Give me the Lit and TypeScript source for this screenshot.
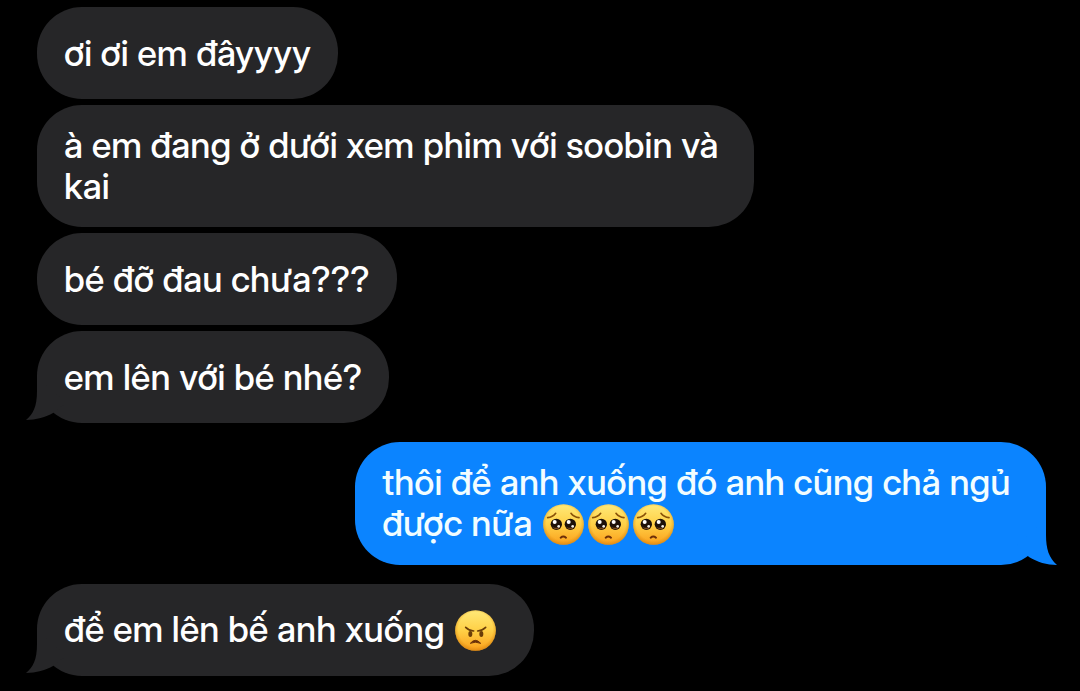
import { LitElement, html, css, svg, nothing } from "lit";
import { customElement, property } from "lit/decorators.js";

type Side = "incoming" | "outgoing";
type Face = "pleading" | "angry";
type Part = string | { face: Face };

interface Message {
  parts: Part[];
}

interface Group {
  side: Side;
  messages: Message[];
}

const pleading: Part = { face: "pleading" };
const angry: Part = { face: "angry" };

const conversation: Group[] = [
  {
    side: "incoming",
    messages: [
      { parts: ["ơi ơi em đâyyyy"] },
      { parts: ["à em đang ở dưới xem phim với soobin và \nkai"] },
      { parts: ["bé đỡ đau chưa???"] },
      { parts: ["em lên với bé nhé?"] },
    ],
  },
  {
    side: "outgoing",
    messages: [
      {
        parts: [
          "thôi để anh xuống đó anh cũng chả ngủ \nđược nữa ",
          pleading,
          pleading,
          pleading,
        ],
      },
    ],
  },
  {
    side: "incoming",
    messages: [{ parts: ["để em lên bế anh xuống ", angry, " "] }],
  },
];

@customElement("emoji-face")
export class EmojiFace extends LitElement {
  static styles = css`
    :host {
      display: inline-block;
      width: 41px;
      height: 41px;
      margin: 0 2px;
      vertical-align: -9px;
      line-height: 0;
    }
    .face {
      display: block;
      width: 100%;
      height: 100%;
    }
  `;

  @property() face: Face = "pleading";

  private pleadingFeatures() {
    const eye = (x: number) => svg`
      <circle cx=${x} cy="61" r="17" fill="#1d1109"></circle>
      <path d=${`M${x - 13} 68 Q${x} 83 ${x + 13} 68 Q${x} 75 ${x - 13} 68Z`} fill="#7a4a1c"></path>
      <circle cx=${x - 5} cy="54" r="6" fill="#fff"></circle>
      <circle cx=${x + 7} cy="67" r="4" fill="#f4efe8"></circle>
    `;
    return svg`
      ${eye(40)}${eye(82)}
      <path d="M14 41 Q29 40 38 28 M84 28 Q93 40 108 41" fill="none" stroke="#8a5208" stroke-width="5" stroke-linecap="round"></path>
      <path d="M53 101 Q61 94 69 101" fill="none" stroke="#6e2f08" stroke-width="6" stroke-linecap="round"></path>
    `;
  }

  private angryFeatures() {
    return svg`
      <ellipse cx="46" cy="72" rx="6" ry="9" fill="#6b3d08"></ellipse>
      <ellipse cx="79" cy="72" rx="6" ry="9" fill="#6b3d08"></ellipse>
      <path d="M32 52 Q42 62 56 63 M92 52 Q82 62 68 63" fill="none" stroke="#6b3d08" stroke-width="5" stroke-linecap="round"></path>
      <path d="M46 100 Q61 82 77 100 Q61 93 46 100Z" fill="#6b3008" stroke="#6b3008" stroke-width="3" stroke-linejoin="round"></path>
    `;
  }

  render() {
    const label = this.face === "angry" ? "😠" : "🥺";
    return html`<svg class="face" viewBox="0 0 123 123" role="img" aria-label=${label}>
      <defs>
        <linearGradient id="skin" x1="0" y1="0" x2="0" y2="1">
          <stop offset="0" stop-color="#ffe978"></stop>
          <stop offset="0.5" stop-color="#ffd046"></stop>
          <stop offset="1" stop-color="#fb9f1c"></stop>
        </linearGradient>
        <radialGradient id="rim" cx="0.5" cy="0.47" r="0.54">
          <stop offset="0.78" stop-color="#e08a0a" stop-opacity="0"></stop>
          <stop offset="1" stop-color="#c97a10" stop-opacity="0.65"></stop>
        </radialGradient>
      </defs>
      <circle cx="61.5" cy="61.5" r="61" fill="url(#skin)"></circle>
      <circle cx="61.5" cy="61.5" r="61" fill="url(#rim)"></circle>
      ${this.face === "angry" ? this.angryFeatures() : this.pleadingFeatures()}
    </svg>`;
  }
}

@customElement("chat-bubble")
export class ChatBubble extends LitElement {
  static styles = css`
    :host {
      display: block;
      max-width: 75%;
    }
    .bubble {
      position: relative;
      display: flex;
      align-items: center;
      box-sizing: border-box;
      min-height: 92px;
      padding: 20px 27px;
      border-radius: 45px;
    }
    .incoming {
      background: #262628;
      color: #ffffff;
      fill: #262628;
    }
    .outgoing {
      background: #0b84ff;
      color: #f2fdff;
      fill: #0b84ff;
    }
    .text {
      position: relative;
      margin: 0;
      font-size: 36px;
      line-height: 41px;
      font-weight: 500;
      white-space: break-spaces;
    }
    .tail {
      position: absolute;
      bottom: 0;
      width: 40px;
      height: 60px;
    }
    .incoming .tail {
      left: -11px;
    }
    .outgoing .tail {
      right: -11px;
    }
  `;

  @property() side: Side = "incoming";
  @property({ attribute: false }) parts: Part[] = [];
  @property({ type: Boolean }) tail = false;

  private renderTail() {
    const d =
      this.side === "incoming"
        ? "M11 14 V28 C11 44 7 51 0 57 C10 57 20 54 27 50 L40 40Z"
        : "M29 14 V30 C29 44 32 53 40 60 C30 60 20 57 12 52 L0 40Z";
    return html`<svg class="tail" viewBox="0 0 40 60" aria-hidden="true"><path d=${d}></path></svg>`;
  }

  render() {
    const content = this.parts.map((part) =>
      typeof part === "string" ? part : html`<emoji-face .face=${part.face}></emoji-face>`
    );
    return html`
      <div class="bubble ${this.side}">
        ${this.tail ? this.renderTail() : nothing}
        <p class="text">${content}</p>
      </div>
    `;
  }
}

@customElement("app-root")
export class AppRoot extends LitElement {
  static styles = css`
    :host {
      display: block;
      min-height: 100vh;
      background: #000000;
      font-family: "Inter Display", Inter, "Liberation Sans", sans-serif;
    }
    .thread {
      display: flex;
      flex-direction: column;
      gap: 19px;
      padding: 7px 34px 15px 37px;
    }
    .group {
      display: flex;
      flex-direction: column;
      gap: 6px;
    }
    .incoming {
      align-items: flex-start;
    }
    .outgoing {
      align-items: flex-end;
    }
  `;

  render() {
    return html`
      <main class="thread">
        ${conversation.map(
          (group) => html`
            <section class="group ${group.side}">
              ${group.messages.map(
                (message, i) => html`<chat-bubble
                  .side=${group.side}
                  .parts=${message.parts}
                  .tail=${i === group.messages.length - 1}
                ></chat-bubble>`
              )}
            </section>
          `
        )}
      </main>
    `;
  }
}
